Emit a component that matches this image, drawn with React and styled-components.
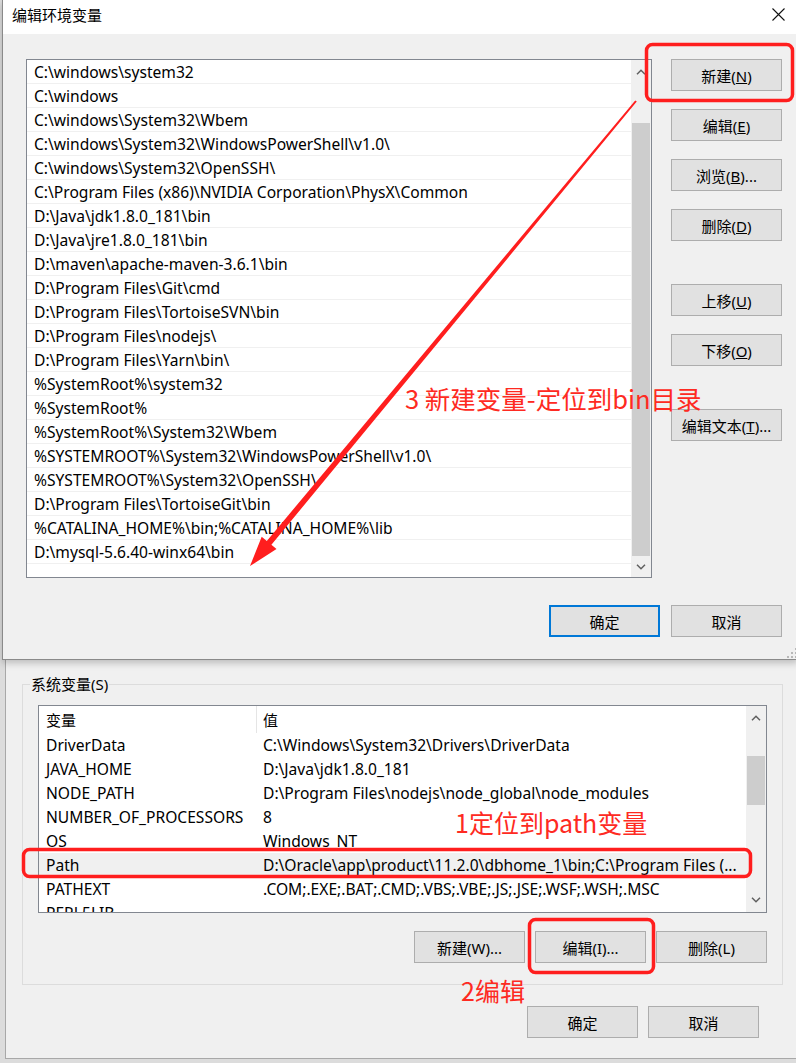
import React from 'react';
import styled, { createGlobalStyle } from 'styled-components';

const GlobalStyle = createGlobalStyle`
  body {
    margin: 0;
    background: #dcdcdc;
  }
  * {
    box-sizing: border-box;
  }
`;

const FONT = `"Noto Sans", "Noto Sans CJK SC", sans-serif`;
const RED = '#fe2a22';

const Page = styled.div`
  position: relative;
  width: 796px;
  height: 1063px;
  overflow: hidden;
  display: flex;
  flex-direction: column;
  font-family: ${FONT};
  font-size: 15px;
  color: #000;
`;

const EditDialog = styled.div`
  position: relative;
  z-index: 2;
  flex-shrink: 0;
  margin-left: 2px;
  width: 796px;
  height: 660px;
  background: #f0f0f0;
  border-left: 1px solid #8a8a8a;
  border-bottom: 1px solid #8a8a8a;
  box-shadow: 0 3px 7px rgba(0, 0, 0, 0.22);
  display: flex;
  flex-direction: column;
`;

const TitleBar = styled.div`
  height: 34px;
  background: #fff;
  display: flex;
  align-items: center;
  justify-content: space-between;
  padding: 0 13px 5px 9px;
`;

const Title = styled.span`
  font-size: 15px;
  font-family: "Noto Sans CJK SC", sans-serif;
`;

const DialogContent = styled.div`
  width: 756px;
  margin: 25px 0 0 23px;
  display: flex;
  flex-direction: column;
`;

const TopArea = styled.div`
  display: flex;
  align-items: flex-start;
`;

const PathList = styled.div`
  width: 626px;
  height: 519px;
  border: 1px solid #828790;
  background: #fff;
  display: flex;
`;

const Rows = styled.div`
  flex: 1;
  overflow: hidden;
`;

const PathRow = styled.div`
  height: 24px;
  border-bottom: 1px solid #f0f0f0;
  padding-left: 7px;
  font-size: 15.6px;
  line-height: 24px;
  white-space: nowrap;
`;

const ScrollBar = styled.div`
  width: 20px;
  background: #f0f0f0;
  display: flex;
  flex-direction: column;
  flex-shrink: 0;
`;

const ArrowBox = styled.div`
  height: ${({ $h }) => $h}px;
  flex-shrink: 0;
  display: flex;
  align-items: center;
  justify-content: center;
`;

const Track = styled.div`
  flex: 1;
`;

const Thumb = styled.div`
  margin: ${({ $top }) => $top}px 1px 0 1px;
  height: ${({ $h }) => $h}px;
  background: #cdcdcd;
`;

const ButtonColumn = styled.div`
  margin-left: 19px;
  display: flex;
  flex-direction: column;
`;

const Button = styled.button`
  width: 111px;
  height: 32px;
  margin-top: ${({ $mt }) => $mt || 0}px;
  background: #e1e1e1;
  border: ${({ $primary }) => ($primary ? '2px solid #0078d7' : '1px solid #adadad')};
  font-family: ${FONT};
  font-size: 15px;
  color: #000;
  padding: 0;
  white-space: nowrap;
`;

const Footer = styled.div`
  display: flex;
  justify-content: flex-end;
  gap: ${({ $gap }) => $gap}px;
  margin-top: ${({ $mt }) => $mt}px;
  padding-right: ${({ $pr }) => $pr || 0}px;
`;

const Grip = styled.svg`
  position: absolute;
  right: 1px;
  bottom: 1px;
`;

const SystemWindow = styled.div`
  flex: 1;
  margin: 0 0 4px 5px;
  background: #f0f0f0;
  border-left: 1px solid #a8a8a8;
  border-bottom: 1px solid #a8a8a8;
  padding: 24px 0 0 16px;
`;

const GroupBox = styled.div`
  position: relative;
  width: 761px;
  height: 301px;
  border: 1px solid #dcdcdc;
  padding: 20px 15px 0 15px;
`;

const GroupLabel = styled.span`
  position: absolute;
  top: -11px;
  left: 7px;
  padding: 0 1px;
  background: #f0f0f0;
  line-height: 20px;
`;

const ListView = styled.div`
  width: 729px;
  height: 208px;
  border: 1px solid #828790;
  background: #fff;
  display: flex;
`;

const Table = styled.div`
  flex: 1;
  overflow: hidden;
`;

const HeaderRow = styled.div`
  height: 27px;
  display: flex;
  align-items: center;
`;

const HeaderCell = styled.div`
  width: ${({ $w }) => ($w ? `${$w}px` : 'auto')};
  flex: ${({ $w }) => ($w ? 'none' : 1)};
  height: 100%;
  display: flex;
  align-items: center;
  padding-left: ${({ $pl }) => $pl}px;
  border-right: ${({ $sep }) => ($sep ? '1px solid #e5e5e5' : 'none')};
`;

const VarRow = styled.div`
  height: 24px;
  display: flex;
  align-items: center;
  font-size: 15.6px;
  background: ${({ $selected }) => ($selected ? '#f0f0f0' : 'transparent')};
  white-space: nowrap;
`;

const Cell = styled.div`
  width: ${({ $w }) => ($w ? `${$w}px` : 'auto')};
  flex: ${({ $w }) => ($w ? 'none' : 1)};
  padding-left: ${({ $pl }) => $pl}px;
  overflow: hidden;
`;

const Overlay = styled.svg`
  position: absolute;
  left: 0;
  top: 0;
  z-index: 5;
  pointer-events: none;
`;

const Note = styled.span`
  position: absolute;
  z-index: 6;
  left: ${({ $x }) => $x}px;
  top: ${({ $y }) => $y}px;
  font-family: "Noto Sans CJK SC", "Noto Sans", sans-serif;
  font-size: ${({ $size }) => $size}px;
  line-height: 1;
  color: ${RED};
  white-space: nowrap;
`;

const paths = [
  'C:\\windows\\system32',
  'C:\\windows',
  'C:\\windows\\System32\\Wbem',
  'C:\\windows\\System32\\WindowsPowerShell\\v1.0\\',
  'C:\\windows\\System32\\OpenSSH\\',
  'C:\\Program Files (x86)\\NVIDIA Corporation\\PhysX\\Common',
  'D:\\Java\\jdk1.8.0_181\\bin',
  'D:\\Java\\jre1.8.0_181\\bin',
  'D:\\maven\\apache-maven-3.6.1\\bin',
  'D:\\Program Files\\Git\\cmd',
  'D:\\Program Files\\TortoiseSVN\\bin',
  'D:\\Program Files\\nodejs\\',
  'D:\\Program Files\\Yarn\\bin\\',
  '%SystemRoot%\\system32',
  '%SystemRoot%',
  '%SystemRoot%\\System32\\Wbem',
  '%SYSTEMROOT%\\System32\\WindowsPowerShell\\v1.0\\',
  '%SYSTEMROOT%\\System32\\OpenSSH\\',
  'D:\\Program Files\\TortoiseGit\\bin',
  '%CATALINA_HOME%\\bin;%CATALINA_HOME%\\lib',
  'D:\\mysql-5.6.40-winx64\\bin',
];

const vars = [
  ['DriverData', 'C:\\Windows\\System32\\Drivers\\DriverData'],
  ['JAVA_HOME', 'D:\\Java\\jdk1.8.0_181'],
  ['NODE_PATH', 'D:\\Program Files\\nodejs\\node_global\\node_modules'],
  ['NUMBER_OF_PROCESSORS', '8'],
  ['OS', 'Windows_NT'],
  ['Path', 'D:\\Oracle\\app\\product\\11.2.0\\dbhome_1\\bin;C:\\Program Files (...'],
  ['PATHEXT', '.COM;.EXE;.BAT;.CMD;.VBS;.VBE;.JS;.JSE;.WSF;.WSH;.MSC'],
  ['PERL5LIB', ''],
];

const Chevron = ({ up }) => (
  <svg width="10" height="6" viewBox="0 0 10 6">
    <path
      d={up ? 'M1 5.2 L5 1.2 L9 5.2' : 'M1 0.8 L5 4.8 L9 0.8'}
      fill="none"
      stroke="#606060"
      strokeWidth="1.5"
    />
  </svg>
);

const CloseIcon = () => (
  <svg width="13" height="13" viewBox="0 0 13 13">
    <path d="M0.5 0.5 L12.5 12.5 M12.5 0.5 L0.5 12.5" stroke="#111" strokeWidth="1.1" />
  </svg>
);

const GripIcon = () => (
  <Grip width="10" height="10" viewBox="0 0 10 10">
    {[
      [8, 0], [8, 4], [4, 4], [8, 8], [4, 8], [0, 8],
    ].map(([x, y]) => (
      <rect key={`${x}-${y}`} x={x} y={y} width="2" height="2" fill="#b8b8b8" />
    ))}
  </Grip>
);

const Annotations = () => (
  <>
    <Overlay width="796" height="1063" viewBox="0 0 796 1063">
      <g fill="none" stroke="#ff1e1e" strokeWidth="3.5">
        <rect x="646.5" y="44.5" width="146" height="56" rx="6" />
        <rect x="23.5" y="849.5" width="727" height="27" rx="6" />
        <rect x="529.5" y="919.5" width="124" height="53" rx="6" />
      </g>
      <polygon
        fill="#ff1e1e"
        points="635.2,100.4 636.8,101.6 271.4,544.8 276.5,549 250,566 261.7,536.8 266.8,541"
      />
    </Overlay>
    <Note $x={405} $y={385} $size={25.5}>3 新建变量-定位到bin目录</Note>
    <Note $x={455} $y={810} $size={25}>1定位到path变量</Note>
    <Note $x={461} $y={978} $size={25}>2编辑</Note>
  </>
);

const App = () => (
  <Page>
    <GlobalStyle />
    <EditDialog>
      <TitleBar>
        <Title>编辑环境变量</Title>
        <CloseIcon />
      </TitleBar>
      <DialogContent>
        <TopArea>
          <PathList>
            <Rows>
              {paths.map(p => (
                <PathRow key={p}>{p}</PathRow>
              ))}
            </Rows>
            <ScrollBar>
              <ArrowBox $h={24}><Chevron up /></ArrowBox>
              <Track><Thumb $top={39} $h={433} /></Track>
              <ArrowBox $h={22}><Chevron /></ArrowBox>
            </ScrollBar>
          </PathList>
          <ButtonColumn>
            <Button>新建(<u>N</u>)</Button>
            <Button $mt={18}>编辑(<u>E</u>)</Button>
            <Button $mt={18}>浏览(<u>B</u>)...</Button>
            <Button $mt={18}>删除(<u>D</u>)</Button>
            <Button $mt={43}>上移(<u>U</u>)</Button>
            <Button $mt={18}>下移(<u>O</u>)</Button>
            <Button $mt={43}>编辑文本(<u>T</u>)...</Button>
          </ButtonColumn>
        </TopArea>
        <Footer $gap={11} $mt={27}>
          <Button $primary>确定</Button>
          <Button>取消</Button>
        </Footer>
      </DialogContent>
      <GripIcon />
    </EditDialog>

    <SystemWindow>
      <GroupBox>
        <GroupLabel>系统变量(S)</GroupLabel>
        <ListView>
          <Table>
            <HeaderRow>
              <HeaderCell $w={218} $pl={7} $sep>变量</HeaderCell>
              <HeaderCell $pl={6}>值</HeaderCell>
            </HeaderRow>
            {vars.map(([name, value]) => (
              <VarRow key={name} $selected={name === 'Path'}>
                <Cell $w={218} $pl={7}>{name}</Cell>
                <Cell $pl={6}>{value}</Cell>
              </VarRow>
            ))}
          </Table>
          <ScrollBar>
            <ArrowBox $h={24}><Chevron up /></ArrowBox>
            <Track><Thumb $top={26} $h={49} /></Track>
            <ArrowBox $h={24}><Chevron /></ArrowBox>
          </ScrollBar>
        </ListView>
        <Footer $gap={10} $mt={18}>
          <Button>新建(W)...</Button>
          <Button>编辑(I)...</Button>
          <Button>删除(L)</Button>
        </Footer>
      </GroupBox>
      <Footer $gap={10} $mt={21} $pr={37}>
        <Button>确定</Button>
        <Button>取消</Button>
      </Footer>
    </SystemWindow>

    <Annotations />
  </Page>
);

export default App;
